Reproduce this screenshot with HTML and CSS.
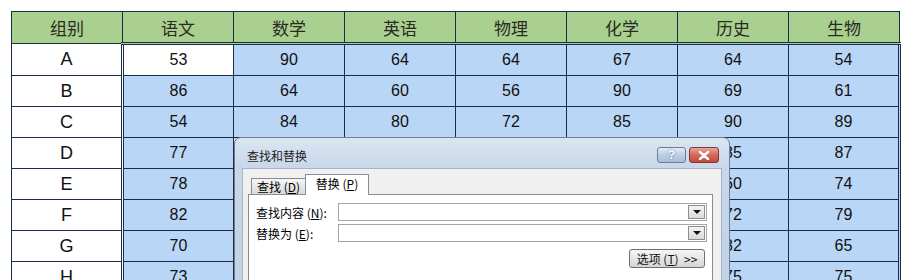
FILE: index.html
```html
<!DOCTYPE html>
<html lang="zh-CN">
<head>
    <meta charset="UTF-8">
    <title>查找和替换</title>
    <link rel="stylesheet" href="styles.css">
</head>
<body>
    <div class="sheet">
        <table class="grid">
            <colgroup>
                <col><col><col><col><col><col><col><col>
            </colgroup>
            <thead>
                <tr>
                    <th>组别</th>
                    <th class="sel">语文</th>
                    <th class="sel">数学</th>
                    <th class="sel">英语</th>
                    <th class="sel">物理</th>
                    <th class="sel">化学</th>
                    <th class="sel">历史</th>
                    <th class="sel">生物</th>
                </tr>
            </thead>
            <tbody id="rows">
                <!-- 行由脚本生成 -->
            </tbody>
        </table>

        <div class="dialog">
            <div class="titlebar">
                <span class="title">查找和替换</span>
                <div class="caption-btns">
                    <span class="btn-help">?</span>
                    <span class="btn-close">
                        <svg width="12" height="9" viewBox="0 0 12 9">
                            <path d="M2 1 L10 8 M10 1 L2 8" stroke="#fff" stroke-width="2.4" stroke-linecap="round"/>
                        </svg>
                    </span>
                </div>
            </div>
            <div class="client">
                <div class="tabs">
                    <span class="tab">查找 (<u>D</u>)</span>
                    <span class="tab active">替换 (<u>P</u>)</span>
                </div>
                <div class="panel">
                    <div class="field">
                        <label>查找内容 (<u>N</u>):</label>
                        <div class="combo"><span class="arrow"></span></div>
                    </div>
                    <div class="field">
                        <label>替换为 (<u>E</u>):</label>
                        <div class="combo"><span class="arrow"></span></div>
                    </div>
                    <div class="actions">
                        <button class="options">选项 (<u>T</u>) &nbsp;&gt;&gt;</button>
                    </div>
                </div>
            </div>
        </div>
    </div>

    <script>
        // 成绩数据（被对话框挡住的格子留空）
        const data = [
            ['A', 53, 90, 64, 64, 67, 64, 54],
            ['B', 86, 64, 60, 56, 90, 69, 61],
            ['C', 54, 84, 80, 72, 85, 90, 89],
            ['D', 77, '', '', '', '', 85, 87],
            ['E', 78, '', '', '', '', 60, 74],
            ['F', 82, '', '', '', '', 72, 79],
            ['G', 70, '', '', '', '', 82, 65],
            ['H', 73, '', '', '', '', 75, 75]
        ];

        (function fillRows() {
            let html = '';
            data.forEach((row, r) => {
                html += '<tr>';
                row.forEach((v, c) => {
                    let cls = [];
                    if (c > 0) cls.push('sel');
                    if (c === 1) cls.push('sel-first');
                    if (c === 7) cls.push('sel-last');
                    if (r === 0 && c === 1) cls.push('active');
                    html += `<td class="${cls.join(' ')}">${v}</td>`;
                });
                html += '</tr>';
            });
            document.getElementById('rows').innerHTML = html;
        })();
    </script>
</body>
</html>
```

FILE: styles.css
```css
body {
    margin: 0;
    background-color: #fff;
    font-family: "Liberation Sans", Arial, "Noto Sans CJK SC", sans-serif;
    overflow: hidden;
}
.sheet {
    position: relative;
    padding: 11px 0 0 11px;
}
.grid {
    border-collapse: collapse;
    table-layout: fixed;
    width: 889px;
}
.grid col {
    width: 111px;
}
.grid th,
.grid td {
    height: 30px;
    padding: 0;
    border: 1px solid #1a2d48;
    text-align: center;
    color: #111;
}
.grid th {
    background-color: #a9d08e;
    font-family: "Noto Sans CJK SC", sans-serif;
    font-weight: normal;
    font-size: 17px;
    color: #2a2a22;
}
.grid td {
    font-size: 16px;
    background-color: #fff;
}
.grid td:first-child {
    font-size: 18px;
}
.grid td.sel {
    background-color: #bad6f6;
}
.grid td.active {
    background-color: #fff;
}
.grid th.sel {
    border-bottom: 3px double #1a2d48;
}
.grid td.sel-first {
    border-left: 3px double #1a2d48;
}
.grid td.sel-last {
    border-right: 3px double #1a2d48;
}

/* 对话框 */
.dialog {
    position: absolute;
    left: 234px;
    top: 137px;
    width: 494px;
    height: 160px;
    border: 1px solid #6d7f94;
    border-radius: 7px 7px 0 0;
    background: linear-gradient(#dce6f2, #c8d7ea 30px, #c1d2e6);
    font-family: "Noto Sans CJK SC", sans-serif;
    font-size: 12px;
    color: #000;
}
.titlebar {
    height: 30px;
    display: flex;
    justify-content: space-between;
    align-items: flex-start;
}
.title {
    margin: 10px 0 0 12px;
    line-height: 16px;
    color: #1e1e1e;
}
.caption-btns {
    display: flex;
    gap: 3px;
    margin: 9px 10px 0 0;
}
.btn-help,
.btn-close {
    display: flex;
    align-items: center;
    justify-content: center;
    height: 14px;
    border: 1px solid #6b7d92;
    border-radius: 3px;
}
.btn-help {
    width: 27px;
    background: linear-gradient(#e3ecf6, #bccde2 50%, #a9bed8);
    color: #fff;
    font-family: "Liberation Sans", sans-serif;
    font-weight: bold;
    font-size: 12px;
    text-shadow: 0 0 2px #4d6580;
}
.btn-close {
    width: 28px;
    border-color: #7a3a32;
    background: linear-gradient(#e8a597, #d4695a 50%, #c04a3a);
}
.client {
    margin: 0 7px 0 7px;
    height: 129px;
    padding: 5px 8px 0 5px;
    background-color: #f0f0f0;
    border: 1px solid #a6b3c3;
    border-bottom: none;
}
.tabs {
    display: flex;
    align-items: flex-end;
    margin-left: 3px;
    height: 20px;
}
.tab {
    height: 15px;
    line-height: 15px;
    width: 53px;
    text-align: center;
    border: 1px solid #898c95;
    border-bottom: none;
    background: linear-gradient(#f6f6f6, #dadada);
}
.tab.active {
    height: 20px;
    line-height: 18px;
    width: 62px;
    margin-bottom: -1px;
    margin-left: -1px;
    background: #fff;
    position: relative;
}
.tab u,
.field u,
.options u {
    text-decoration: underline;
}
.panel {
    background-color: #fff;
    border: 1px solid #898c95;
    height: 90px;
    padding: 8px 5px 0 7px;
}
.field {
    display: flex;
    align-items: center;
    height: 18px;
    margin-bottom: 3px;
}
.field label {
    width: 82px;
}
.combo {
    flex: 1;
    height: 16px;
    border: 1px solid #a5a5a5;
    display: flex;
    justify-content: flex-end;
    align-items: center;
    padding-right: 1px;
}
.arrow {
    width: 15px;
    height: 12px;
    border: 1px solid #8e8e8e;
    background: linear-gradient(#f4f4f4, #d9d9d9);
    display: flex;
    align-items: center;
    justify-content: center;
}
.arrow::after {
    content: "";
    border-left: 4px solid transparent;
    border-right: 4px solid transparent;
    border-top: 4px solid #111;
}
.actions {
    display: flex;
    justify-content: flex-end;
    margin-top: 7px;
    padding-right: 2px;
}
.options {
    width: 76px;
    height: 19px;
    padding: 0;
    font-family: "Noto Sans CJK SC", sans-serif;
    font-size: 12px;
    color: #111;
    border: 1px solid #707070;
    border-radius: 3px;
    background: linear-gradient(#f4f4f4, #e6e6e6 50%, #d4d4d4);
}
```
